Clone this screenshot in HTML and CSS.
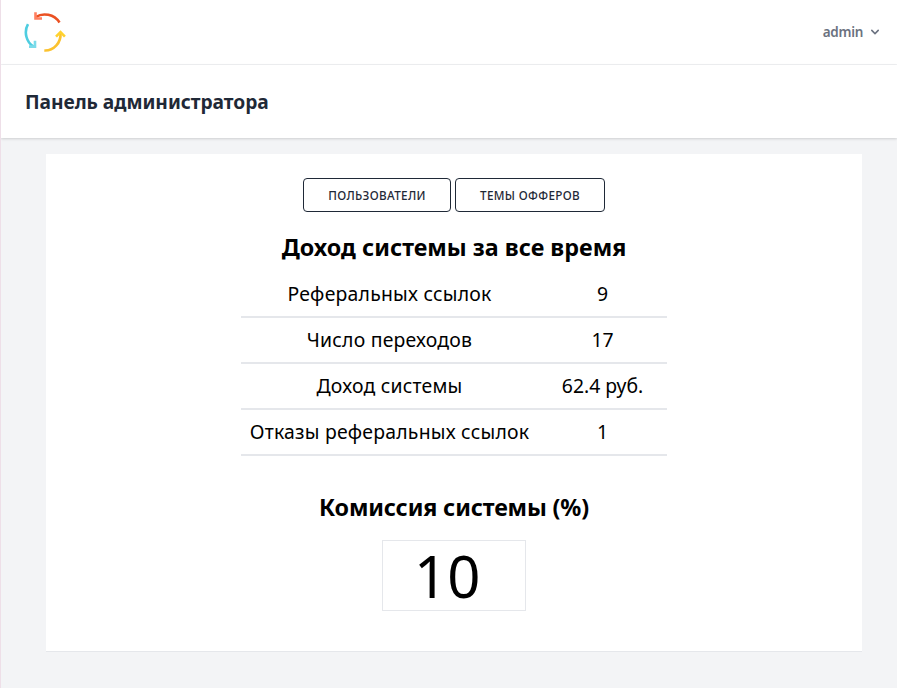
FILE: index.html
```html
<!DOCTYPE html>
<html lang="ru">
<head>
<meta charset="utf-8">
<title>Панель администратора</title>
<link rel="stylesheet" href="styles.css">
</head>
<body>
<nav class="nav">
  <svg class="logo" viewBox="0 0 42 42" fill="none" stroke-width="2.6">
    <path stroke="#eb5122" d="M35.500 11.500C30 3 19 1.500 12 5.800"/>
    <path stroke="#ff7f60" d="M11.500 1.200V7.500H18"/>
    <path stroke="#4ecde0" d="M4 13.200C-.5 21 2.500 31.500 9.500 35.500"/>
    <path stroke="#7bdbea" d="M5 35.600H11V29.800"/>
    <path stroke="#fbc22f" d="M20.300 39.500C29.500 40 37.300 32 36.500 22"/>
    <path stroke="#ffd22e" d="M32 25.700L36.500 21.200L40.900 25.700"/>
  </svg>
  <div class="user"><span>admin</span>
    <svg class="chevron" viewBox="0 0 20 20" fill="currentColor"><path fill-rule="evenodd" d="M5.293 7.293a1 1 0 011.414 0L10 10.586l3.293-3.293a1 1 0 111.414 1.414l-4 4a1 1 0 01-1.414 0l-4-4a1 1 0 010-1.414z"/></svg>
  </div>
</nav>
<header class="header"><h1 class="title">Панель администратора</h1></header>
<main class="card">
  <div class="actions"><button class="btn btn-users">Пользователи</button><button class="btn btn-topics">Темы офферов</button></div>
  <h2 class="heading income">Доход системы за все время</h2>
  <table class="stats">
    <tr><td>Реферальных ссылок</td><td>9</td></tr>
    <tr><td>Число переходов</td><td>17</td></tr>
    <tr><td>Доход системы</td><td>62.4 руб.</td></tr>
    <tr><td>Отказы реферальных ссылок</td><td>1</td></tr>
  </table>
  <h2 class="heading fee">Комиссия системы (%)</h2>
  <div class="commission">10</div>
</main>
</body>
</html>
```
FILE: styles.css
```css
* { box-sizing: border-box; }
body { margin: 0; min-height: 688px; background: #f3f4f6; border-left: 1px solid #eedfe8; font-family: "Noto Sans", sans-serif; color: #000; }
h1, h2 { margin: 0; }
.nav { height: 65px; background: #fff; border-bottom: 1px solid #f0f1f3; display: flex; align-items: center; justify-content: space-between; padding: 0 14px 0 23px; }
.logo { width: 42px; height: 42px; }
.user { display: flex; align-items: center; gap: 4px; font-size: 13.500px; font-weight: 600; letter-spacing: -.3px; line-height: 20px; color: #6b7280; }
.chevron { width: 16px; height: 16px; }
.header { height: 73px; background: #fff; box-shadow: 0 1px 3px rgba(0,0,0,.1), 0 1px 2px rgba(0,0,0,.06); padding: 24px; }
.title { font-size: 19.2px; line-height: 25px; font-weight: 700; letter-spacing: -.04px; color: #1f2937; white-space: nowrap; }
.card { width: 816px; height: 498px; margin: 16px 0 0 45px; padding: 24px 0; background: #fff; border-bottom: 1px solid #e5e7eb; display: flex; flex-direction: column; align-items: center; }
.actions { display: flex; gap: 4px; }
.btn { height: 34px; padding: 0; border: 1px solid #1f2937; border-radius: 4px; background: #fff; color: #1f2937; font: 500 11.7px/16px "Noto Sans", sans-serif; letter-spacing: .34px; text-transform: uppercase; white-space: nowrap; }
.btn-users { width: 148px; }
.btn-topics { width: 150px; }
.heading { font-size: 23.300px; line-height: 32px; font-weight: 700; letter-spacing: -.15px; white-space: nowrap; }
.income { margin-top: 19px; letter-spacing: .01px; }
.stats { width: 426px; margin: 8px 0 0; border-collapse: collapse; table-layout: fixed; font-size: 19.400px; line-height: 28px; text-align: center; }
.stats td { height: 46px; padding: 8px 0; border-bottom: 2px solid #e5e7eb; white-space: nowrap; }
.stats td:first-child { width: 297px; letter-spacing: .22px; }
.fee { margin-top: 35px; }
.commission { width: 144px; height: 71px; margin-top: 17px; border: 1px solid #e5e7eb; font-size: 58px; line-height: 69px; padding-left: 31px; }
```
